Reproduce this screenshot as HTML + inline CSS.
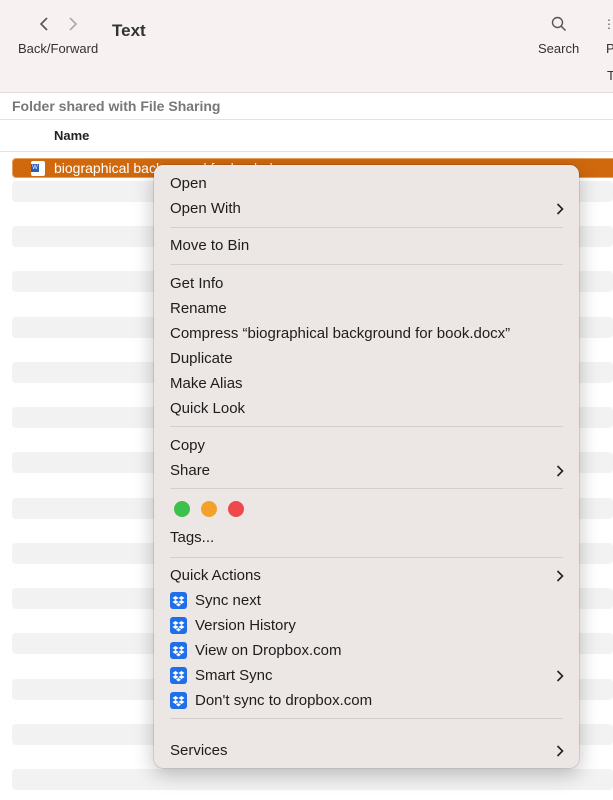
<html><head><style>
body{margin:0;width:613px;height:800px;overflow:hidden;background:#fff;font-family:"Liberation Sans",sans-serif;position:relative}
.tb{position:absolute;left:0;top:0;width:613px;height:92px;background:#f7f1f1;border-bottom:1px solid #e2dcdc}
.a{position:absolute;white-space:nowrap}
.stripe{position:absolute;left:12px;width:601px;height:21px;background:#f3f2f2;border-radius:4px}
.menu{position:absolute;left:154px;top:165px;width:425px;height:603px;background:#ece6e4;border-radius:9px;box-shadow:0 6px 20px rgba(0,0,0,.25),0 0 0 .5px rgba(0,0,0,.2)}
.mi{position:absolute;left:16px;font-size:15px;color:#1d1d1d;white-space:nowrap}
.sep{position:absolute;left:16px;right:16px;height:1px;background:#d4cfcd}
.chev{position:absolute;right:15px;width:8px;height:12px}
.db{position:absolute;left:16px;width:17px;height:17px;background:#1f6fe8;border-radius:3px}
.db svg{position:absolute;left:2px;top:2px}
.dot{position:absolute;width:16px;height:16px;border-radius:50%}
</style></head><body>
<div class="tb"></div>
<svg class="a" style="left:37px;top:16px" width="45" height="16"><path d="M10 2 L4 8 L10 14" stroke="#555" stroke-width="1.6" fill="none"/><path d="M33 2 L39 8 L33 14" stroke="#aaa" stroke-width="1.6" fill="none"/></svg>
<div class="a" style="left:18px;top:41px;font-size:13px;color:#333">Back/Forward</div>
<div class="a" style="left:112px;top:21px;font-size:17px;font-weight:bold;color:#333">Text</div>
<svg class="a" style="left:551px;top:16px" width="16" height="16"><circle cx="6.5" cy="6.5" r="5" stroke="#555" stroke-width="1.4" fill="none"/><path d="M10 10 L14.5 14.5" stroke="#555" stroke-width="1.5"/></svg>
<div class="a" style="left:538px;top:41px;font-size:13px;color:#333">Search</div>
<div class="a" style="left:603px;top:17px;font-size:12px;color:#555">⋮≡</div>
<div class="a" style="left:606px;top:41px;font-size:13px;color:#333">P</div>
<div class="a" style="left:607px;top:68px;font-size:13px;color:#333">T</div>
<div class="a" style="left:12px;top:98px;font-size:14px;font-weight:bold;color:#777">Folder shared with File Sharing</div>
<div class="a" style="left:0;top:119px;width:613px;height:1px;background:#e2e2e2"></div>
<div class="a" style="left:54px;top:128px;font-size:13px;font-weight:bold;color:#222">Name</div>
<div class="a" style="left:0;top:151px;width:613px;height:1px;background:#e2e2e2"></div>
<div class="a" style="left:12px;top:158px;width:605px;height:20px;background:#d0690e;border:1.5px solid #e8a060;border-radius:4px;box-sizing:border-box"></div>
<div class="a" style="left:31px;top:161px;width:14px;height:15px;background:#fff;border-radius:2px"><div style="position:absolute;left:0;top:3px;width:8px;height:8px;background:#2b5cb8;color:#fff;font-size:6px;text-align:center;line-height:8px">W</div></div>
<div class="a" style="left:54px;top:160px;font-size:14px;color:#fff">biographical background for book.docx</div>
<div class="stripe" style="top:181px"></div><div class="stripe" style="top:226px"></div><div class="stripe" style="top:271px"></div><div class="stripe" style="top:317px"></div><div class="stripe" style="top:362px"></div><div class="stripe" style="top:407px"></div><div class="stripe" style="top:452px"></div><div class="stripe" style="top:498px"></div><div class="stripe" style="top:543px"></div><div class="stripe" style="top:588px"></div><div class="stripe" style="top:633px"></div><div class="stripe" style="top:679px"></div><div class="stripe" style="top:724px"></div><div class="stripe" style="top:769px"></div>
<div class="menu">
<div class="mi" style="top:10px">Open</div>
<div class="mi" style="top:35px">Open With</div><svg class="chev" style="top:38px"><path d="M1.5 1 L6.5 6 L1.5 11" stroke="#222" stroke-width="1.6" fill="none"/></svg>
<div class="sep" style="top:62px"></div>
<div class="mi" style="top:72px">Move to Bin</div>
<div class="sep" style="top:99px"></div>
<div class="mi" style="top:110px">Get Info</div>
<div class="mi" style="top:135px">Rename</div>
<div class="mi" style="top:160px">Compress “biographical background for book.docx”</div>
<div class="mi" style="top:185px">Duplicate</div>
<div class="mi" style="top:210px">Make Alias</div>
<div class="mi" style="top:235px">Quick Look</div>
<div class="sep" style="top:261px"></div>
<div class="mi" style="top:272px">Copy</div>
<div class="mi" style="top:297px">Share</div><svg class="chev" style="top:300px"><path d="M1.5 1 L6.5 6 L1.5 11" stroke="#222" stroke-width="1.6" fill="none"/></svg>
<div class="sep" style="top:323px"></div>
<div class="dot" style="left:20px;top:336px;background:#3cc24c"></div>
<div class="dot" style="left:47px;top:336px;background:#f4a12a"></div>
<div class="dot" style="left:74px;top:336px;background:#ee4a4e"></div>
<div class="mi" style="top:364px">Tags...</div>
<div class="sep" style="top:392px"></div>
<div class="mi" style="top:402px">Quick Actions</div><svg class="chev" style="top:405px"><path d="M1.5 1 L6.5 6 L1.5 11" stroke="#222" stroke-width="1.6" fill="none"/></svg>
<div class="db" style="top:427px"><svg width="13" height="13"><path d="M3.5 2 L6.5 4 L3.5 6 L0.5 4Z M9.5 2 L12.5 4 L9.5 6 L6.5 4Z M3.5 6 L6.5 8 L3.5 10 L0.5 8Z M9.5 6 L12.5 8 L9.5 10 L6.5 8Z M6.5 9 L9 10.8 L6.5 12.5 L4 10.8Z" fill="#fff"/></svg></div>
<div class="mi" style="top:427px;left:41px">Sync next</div>
<div class="db" style="top:452px"><svg width="13" height="13"><path d="M3.5 2 L6.5 4 L3.5 6 L0.5 4Z M9.5 2 L12.5 4 L9.5 6 L6.5 4Z M3.5 6 L6.5 8 L3.5 10 L0.5 8Z M9.5 6 L12.5 8 L9.5 10 L6.5 8Z M6.5 9 L9 10.8 L6.5 12.5 L4 10.8Z" fill="#fff"/></svg></div>
<div class="mi" style="top:452px;left:41px">Version History</div>
<div class="db" style="top:477px"><svg width="13" height="13"><path d="M3.5 2 L6.5 4 L3.5 6 L0.5 4Z M9.5 2 L12.5 4 L9.5 6 L6.5 4Z M3.5 6 L6.5 8 L3.5 10 L0.5 8Z M9.5 6 L12.5 8 L9.5 10 L6.5 8Z M6.5 9 L9 10.8 L6.5 12.5 L4 10.8Z" fill="#fff"/></svg></div>
<div class="mi" style="top:477px;left:41px">View on Dropbox.com</div>
<div class="db" style="top:502px"><svg width="13" height="13"><path d="M3.5 2 L6.5 4 L3.5 6 L0.5 4Z M9.5 2 L12.5 4 L9.5 6 L6.5 4Z M3.5 6 L6.5 8 L3.5 10 L0.5 8Z M9.5 6 L12.5 8 L9.5 10 L6.5 8Z M6.5 9 L9 10.8 L6.5 12.5 L4 10.8Z" fill="#fff"/></svg></div>
<div class="mi" style="top:502px;left:41px">Smart Sync</div><svg class="chev" style="top:505px"><path d="M1.5 1 L6.5 6 L1.5 11" stroke="#222" stroke-width="1.6" fill="none"/></svg>
<div class="db" style="top:527px"><svg width="13" height="13"><path d="M3.5 2 L6.5 4 L3.5 6 L0.5 4Z M9.5 2 L12.5 4 L9.5 6 L6.5 4Z M3.5 6 L6.5 8 L3.5 10 L0.5 8Z M9.5 6 L12.5 8 L9.5 10 L6.5 8Z M6.5 9 L9 10.8 L6.5 12.5 L4 10.8Z" fill="#fff"/></svg></div>
<div class="mi" style="top:527px;left:41px">Don't sync to dropbox.com</div>
<div class="sep" style="top:553px"></div>
<div class="mi" style="top:577px">Services</div><svg class="chev" style="top:580px"><path d="M1.5 1 L6.5 6 L1.5 11" stroke="#222" stroke-width="1.6" fill="none"/></svg>
</div>
</body></html>
